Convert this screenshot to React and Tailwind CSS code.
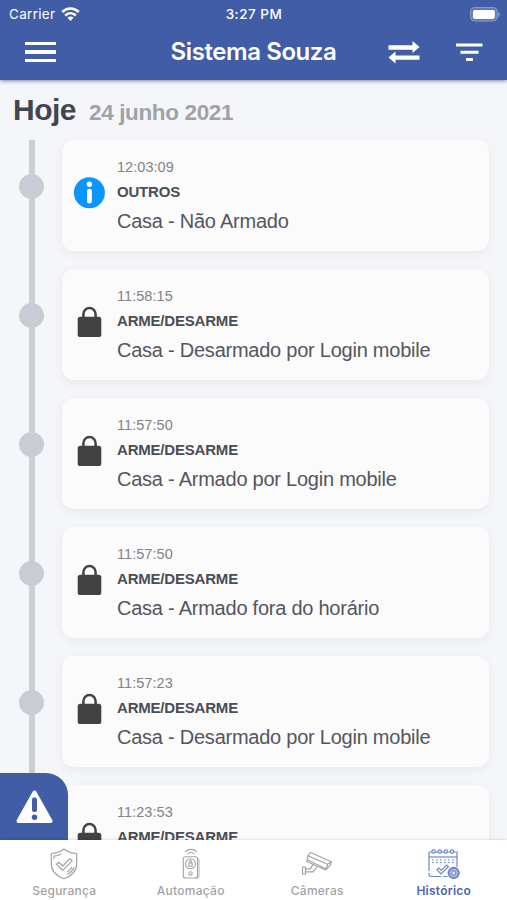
import React, { useState } from 'react';

const events = [
  { id: 1, time: '12:03:09', type: 'OUTROS', text: 'Casa - Não Armado', icon: 'info' },
  { id: 2, time: '11:58:15', type: 'ARME/DESARME', text: 'Casa - Desarmado por Login mobile', icon: 'lock' },
  { id: 3, time: '11:57:50', type: 'ARME/DESARME', text: 'Casa - Armado por Login mobile', icon: 'lock' },
  { id: 4, time: '11:57:50', type: 'ARME/DESARME', text: 'Casa - Armado fora do horário', icon: 'lock' },
  { id: 5, time: '11:57:23', type: 'ARME/DESARME', text: 'Casa - Desarmado por Login mobile', icon: 'lock' },
  { id: 6, time: '11:23:53', type: 'ARME/DESARME', icon: 'lock' },
];

function InfoIcon() {
  return (
    <svg width="32" height="32" viewBox="0 0 32 32">
      <circle cx="16.400" cy="15.700" r="15.500" fill="#0a95ff" />
      <circle cx="16.400" cy="7.200" r="2.700" fill="#fff" />
      <rect x="14" y="11.800" width="4.900" height="14.700" rx="2.200" fill="#fff" />
    </svg>
  );
}

function LockIcon() {
  return (
    <svg width="32" height="32" viewBox="0 0 32 32">
      <path d="M10.400 12V8.200a6.100 6.100 0 0 1 12.200 0V12" fill="none" stroke="#424242" strokeWidth="2.500" />
      <rect x="4.700" y="10.800" width="23.600" height="20.200" rx="2.600" fill="#424242" />
    </svg>
  );
}

function ShieldIcon() {
  return (
    <svg width="30" height="32" viewBox="0 0 30 32" fill="none" stroke="currentColor" strokeWidth="1.200" strokeLinecap="round" strokeLinejoin="round">
      <path d="M15 1c4 3 8 4.300 12.700 4.500v10.500c0 7-5 11.800-12.700 14.700C7.300 27.800 2.300 23 2.300 16V5.500C7 5.300 11 4 15 1z" />
      <path d="M5 10.500V8.200c3-.3 5-.9 7-2M25 19.500c-1.200 3-3.200 5-6 6.600M22.500 19.500c-.8 1.800-2 3.200-3.800 4.300" />
      <path d="M7.500 16.200l2.200-2 4 3.800 7.200-7.300 2.200 2.100-9.400 9.500z" />
    </svg>
  );
}

function RemoteIcon() {
  return (
    <svg width="22" height="32" viewBox="0 0 22 32" fill="none" stroke="currentColor" strokeWidth="1.100" strokeLinecap="round">
      <path d="M5.500 3.600C8.500.6 13.500.6 16.500 3.600M8 5.800c1.800-1.500 4.200-1.500 6 0" />
      <rect x="3.300" y="8.800" width="14.200" height="21.200" rx="2" />
      <path d="M17.500 10.300c1 .3 1.500 1 1.500 2V28c0 1.600-.8 2.500-2.500 2.500" strokeWidth=".8" />
      <circle cx="10.500" cy="15.800" r="5" />
      <path d="M8.900 15h3.200v3.200H8.900zM9.300 15v-1.200a1.200 1.200 0 0 1 2.400 0V15" />
      <circle cx="10.500" cy="25.400" r="1.700" />
    </svg>
  );
}

function CameraIcon() {
  return (
    <svg width="32" height="26" viewBox="0 0 32 26" fill="none" stroke="currentColor" strokeWidth="1.200" strokeLinejoin="round" strokeLinecap="round">
      <path d="M9.500 1.500L30.500 10.700l-1.600 4.200-3.600 3.100L6.300 8.800 7 4.700z" />
      <path d="M7 4.700l19.500 8.600-1.200 4.700M26.500 13.300l4-2.600" />
      <path d="M6.300 8.800l-.5 1.700L24 18.700l1.300-.7" />
      <path d="M12 13.600l-2.800 4.200H4.500M16.200 15.500l-4 5.300H4.500" />
      <path d="M1.500 16h3v7h-3z" />
    </svg>
  );
}

function CalendarIcon() {
  return (
    <svg width="34" height="32" viewBox="0 0 34 32" fill="none" stroke="#6f87c2" strokeWidth="1.200">
      <path d="M2 4h28v15M2 4v19M2 25v1c0 1.600.9 2.500 2.500 2.500H14M16 28.500h4.500" />
      <path d="M2 9h28" />
      <g fill="#fff">
        <circle cx="6.500" cy="3.500" r="1.700" />
        <circle cx="12.700" cy="3.500" r="1.700" />
        <circle cx="18.900" cy="3.500" r="1.700" />
        <circle cx="25.100" cy="3.500" r="1.700" />
      </g>
      <path d="M5 12h22.500M5 14.500h22.500" strokeWidth="1.100" strokeDasharray="1.800 2.200" />
      <path d="M10 21.800l1.900-1.700 2.300 2.300 5.500-5.300 1.700 1.700-7.300 7.200z" />
      <circle cx="26.700" cy="25" r="5.200" fill="#a9b8dd" strokeWidth="1.900" />
      <path d="M25 23.200h3.500v3.500H25z" fill="#e6ebf6" strokeWidth=".9" />
    </svg>
  );
}

function StatusBar() {
  return (
    <div className="grid grid-cols-3 items-center h-7 pl-[9px] pr-[6px] text-[13.500px] leading-7">
      <div className="flex items-center gap-[6px]">
        <span className="tracking-[0.3px]">Carrier</span>
        <svg width="19" height="15" viewBox="0 0 19 15" fill="none" stroke="#fff" strokeWidth="2.700">
          <path d="M1.200 5c4.800-4.700 11.800-4.700 16.600 0M4.200 8.500c3.100-3 7.500-3 10.600 0" />
          <path d="M6.500 10.700c1.700-1.600 4.300-1.600 6 0l-3 3.300z" fill="#fff" stroke="none" />
        </svg>
      </div>
      <div className="-ml-[2px] text-center font-medium tracking-[0.5px]">3:27 PM</div>
      <div className="flex justify-end">
        <svg width="31" height="15" viewBox="0 0 31 15">
          <rect x=".6" y=".6" width="26.600" height="13.400" rx="4" fill="#6078b5" stroke="#8e9fca" strokeWidth="1" />
          <rect x="2.900" y="2.900" width="22" height="9" rx="1.800" fill="#fff" />
          <path d="M28.300 5c2 .8 2 4.200 0 5z" fill="#8e9fca" />
        </svg>
      </div>
    </div>
  );
}

function Header() {
  return (
    <header className="relative z-10 h-[80px] shrink-0 bg-[#405da5] text-white shadow-[0_1px_4px_rgba(20,40,80,0.55)] font-[Inter,sans-serif]">
      <StatusBar />
      <div className="flex items-center h-12 pl-[25px] pr-[24px]">
        <button className="flex flex-col gap-[5px] w-[31px]" aria-label="Menu">
          <span className="h-[3.500px] w-full bg-white"></span>
          <span className="h-[3.500px] w-full bg-white"></span>
          <span className="h-[3.500px] w-full bg-white"></span>
        </button>
        <h1 className="flex-1 pl-[95px] text-center text-[24px] font-semibold tracking-[-0.42px] whitespace-nowrap">Sistema Souza</h1>
        <div className="flex items-center ml-[32px] gap-[36px]">
          <svg width="32" height="24" viewBox="0 0 32 24" fill="#fff">
            <path d="M.5 5.200H24.500V1L31.500 7l-7 6V9.700H.5zM31.500 15.400H7.500V11.500L.5 17.500l7 6V19.800h24z" />
          </svg>
          <svg width="27" height="19" viewBox="0 0 27 19" fill="#fff">
            <rect y=".5" width="26.500" height="3" rx=".5" />
            <rect x="4.500" y="7.700" width="18" height="3" rx=".5" />
            <rect x="10" y="15" width="7" height="3" rx=".5" />
          </svg>
        </div>
      </div>
    </header>
  );
}

function EventRow({ event }) {
  return (
    <li className="flex h-[129px]">
      <div className="relative w-[62px] shrink-0">
        <div className="absolute left-[29px] top-0 h-full w-[6px] bg-[#cdcfd4]"></div>
        <div className="absolute left-[19px] top-[34px] size-[25px] rounded-full bg-[#c9ccd5]"></div>
      </div>
      <div className="flex items-center w-[427px] h-[111px] pl-[11px] bg-[#fbfbfc] rounded-[12px] shadow-[0_3px_10px_rgba(60,70,90,0.07)]">
        <div className="mt-[-5px] mr-[12px]">{event.icon === 'info' ? <InfoIcon /> : <LockIcon />}</div>
        <div className="whitespace-nowrap">
          <div className="h-[25px] text-[14.500px] leading-[25px] tracking-[0.05px] text-[#828285]">{event.time}</div>
          <div className="h-[25px] text-[15px] leading-[24px] tracking-[-0.2px] font-bold text-[#4b4d55]">{event.type}</div>
          <div className="h-[31px] text-[20px] leading-[33px] tracking-[-0.24px] text-[#54565e]">{event.text}</div>
        </div>
      </div>
    </li>
  );
}

const tabs = [
  { name: 'Segurança', Icon: ShieldIcon },
  { name: 'Automação', Icon: RemoteIcon },
  { name: 'Câmeras', Icon: CameraIcon },
  { name: 'Histórico', Icon: CalendarIcon },
];

export default function App() {
  const [active, setActive] = useState('Histórico');

  return (
    <div className="flex flex-col w-[507px] h-[900px] overflow-hidden bg-[#f5f6fa] font-['Liberation_Sans',sans-serif]">
      <Header />
      <main className="relative flex-1 min-h-0 overflow-hidden">
        <div className="flex items-baseline h-[60px] pl-[13px] pt-[10px] gap-[13px] font-bold whitespace-nowrap">
          <h2 className="text-[30px] leading-[40px] tracking-[-0.5px] text-[#44464e]">Hoje</h2>
          <span className="text-[22.500px] tracking-[-0.36px] text-[#9fa2a7]">24 junho 2021</span>
        </div>
        <ul>
          {events.map((event) => (
            <EventRow key={event.id} event={event} />
          ))}
        </ul>
        <button className="absolute left-0 bottom-0 w-[68px] h-[67px] flex items-center justify-center rounded-tr-[22px] bg-[#405da5]" aria-label="Alerta">
          <svg width="40" height="34" viewBox="0 0 40 34">
            <path d="M20.500 2.500L36.500 31H4.500z" fill="#fff" stroke="#fff" strokeWidth="4" strokeLinejoin="round" />
            <rect x="18" y="7.500" width="5" height="14.500" rx="2" fill="#405da5" />
            <circle cx="20.500" cy="27.300" r="2.700" fill="#405da5" />
          </svg>
        </button>
      </main>
      <nav className="relative grid grid-cols-4 h-[60px] pl-[1px] shrink-0 bg-white shadow-[0_0_3px_rgba(0,0,0,0.2)] font-[Inter,sans-serif]">
        {tabs.map(({ name, Icon }) => (
          <button
            key={name}
            onClick={() => setActive(name)}
            className={`flex flex-col items-center pt-[6px] ${active === name ? 'text-[#4b68b0] font-semibold' : 'text-[#a3a3a5] font-medium'}`}
          >
            <span className="flex items-center h-[35px]"><Icon /></span>
            <span className="text-[12px] leading-[20px] tracking-[0.25px]">{name}</span>
          </button>
        ))}
      </nav>
    </div>
  );
}
